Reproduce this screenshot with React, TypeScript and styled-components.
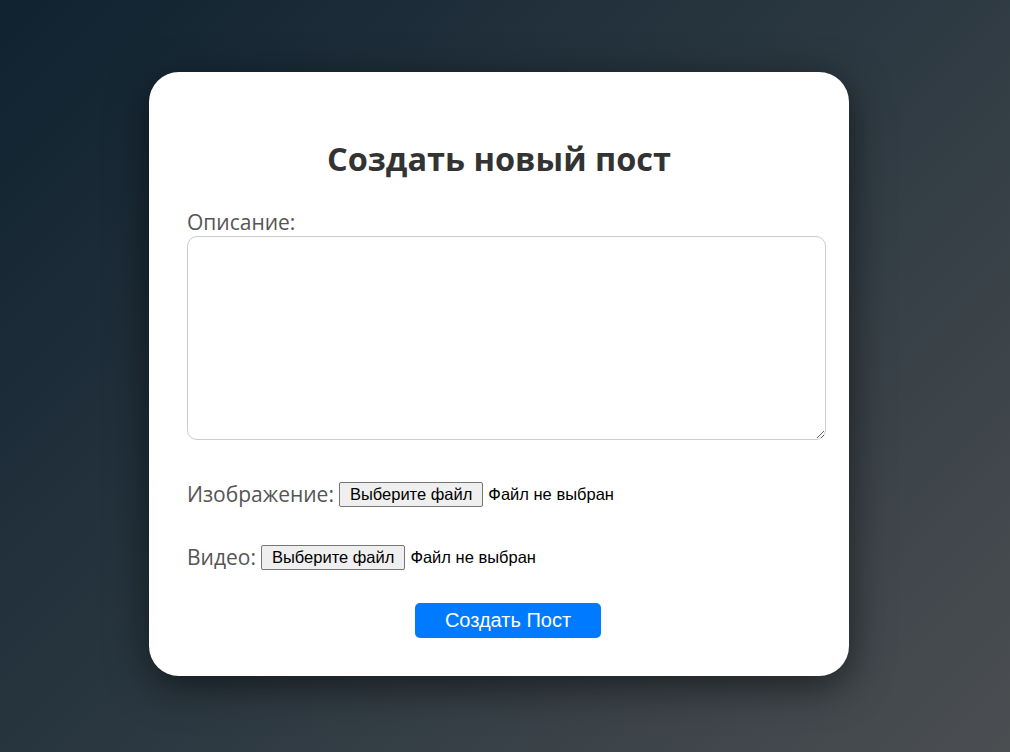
import React from 'react';
import styled, { createGlobalStyle } from 'styled-components';

const GlobalStyle = createGlobalStyle({
  '*': {
    boxSizing: 'border-box',
  },
  body: {
    background: 'linear-gradient(135deg, #102230 0%, #2b3841 50%, #4b4e51 100%)',
    fontFamily: '"Open Sans", "Noto Sans", sans-serif',
    margin: 0,
    minHeight: '100vh',
  },
});

const Page = styled.div({
  alignItems: 'center',
  display: 'flex',
  justifyContent: 'center',
  minHeight: '100vh',
  padding: '0 12px 4px 0',
});

const Card = styled.div({
  backgroundColor: '#fff',
  borderRadius: 30,
  boxShadow: '0 10px 40px rgba(0, 0, 0, 0.55)',
  display: 'flex',
  flexDirection: 'column',
  height: 604,
  padding: '65px 38px 38px',
  width: 700,
});

const Title = styled.h2({
  color: '#333',
  fontSize: 32.5,
  fontWeight: 700,
  lineHeight: '44px',
  margin: '0 0 27px',
  textAlign: 'center',
});

const Label = styled.label({
  color: '#555',
  fontSize: 21,
  lineHeight: '28px',
});

const TextArea = styled.textarea({
  border: '1px solid #ccc',
  borderRadius: 10,
  display: 'block',
  fontFamily: 'inherit',
  height: 204,
  margin: 0,
  outline: 'none',
  resize: 'vertical',
  width: 639,
});

const FileRow = styled.div<{ $top: number }>((props) => ({
  alignItems: 'center',
  display: 'flex',
  gap: 5,
  marginTop: props.$top,
}));

const FileButton = styled.button({
  backgroundColor: '#efefef',
  border: '1px solid #767676',
  borderRadius: 2,
  color: '#000',
  fontFamily: '"Liberation Sans", Arial, sans-serif',
  fontSize: 16.5,
  height: 25,
  lineHeight: '18px',
  margin: 0,
  padding: '1px 10px',
});

const FileStatus = styled.span({
  color: '#000',
  fontFamily: '"Liberation Sans", Arial, sans-serif',
  fontSize: 16.5,
});

const SubmitRow = styled.div({
  display: 'flex',
  flexShrink: 0,
  justifyContent: 'center',
  marginTop: 32,
  width: 642,
});

const SubmitButton = styled.button({
  backgroundColor: '#007bff',
  border: 'none',
  borderRadius: 5,
  color: '#fff',
  cursor: 'pointer',
  fontFamily: '"Liberation Sans", Arial, sans-serif',
  fontSize: 20,
  height: 35,
  width: 186,
});

const FileField: React.FC<{ label: string; top: number }> = ({ label, top }) => (
  <FileRow $top={top}>
    <Label>{label}</Label>
    <FileButton type="button">Выберите файл</FileButton>
    <FileStatus>Файл не выбран</FileStatus>
  </FileRow>
);

const App: React.FC = () => {
  return (
    <Page>
      <GlobalStyle />
      <Card>
        <Title>Создать новый пост</Title>
        <Label htmlFor="description">Описание:</Label>
        <TextArea id="description" />
        <FileField label="Изображение:" top={40} />
        <FileField label="Видео:" top={35} />
        <SubmitRow>
          <SubmitButton type="button">Создать Пост</SubmitButton>
        </SubmitRow>
      </Card>
    </Page>
  );
};

export default App;
